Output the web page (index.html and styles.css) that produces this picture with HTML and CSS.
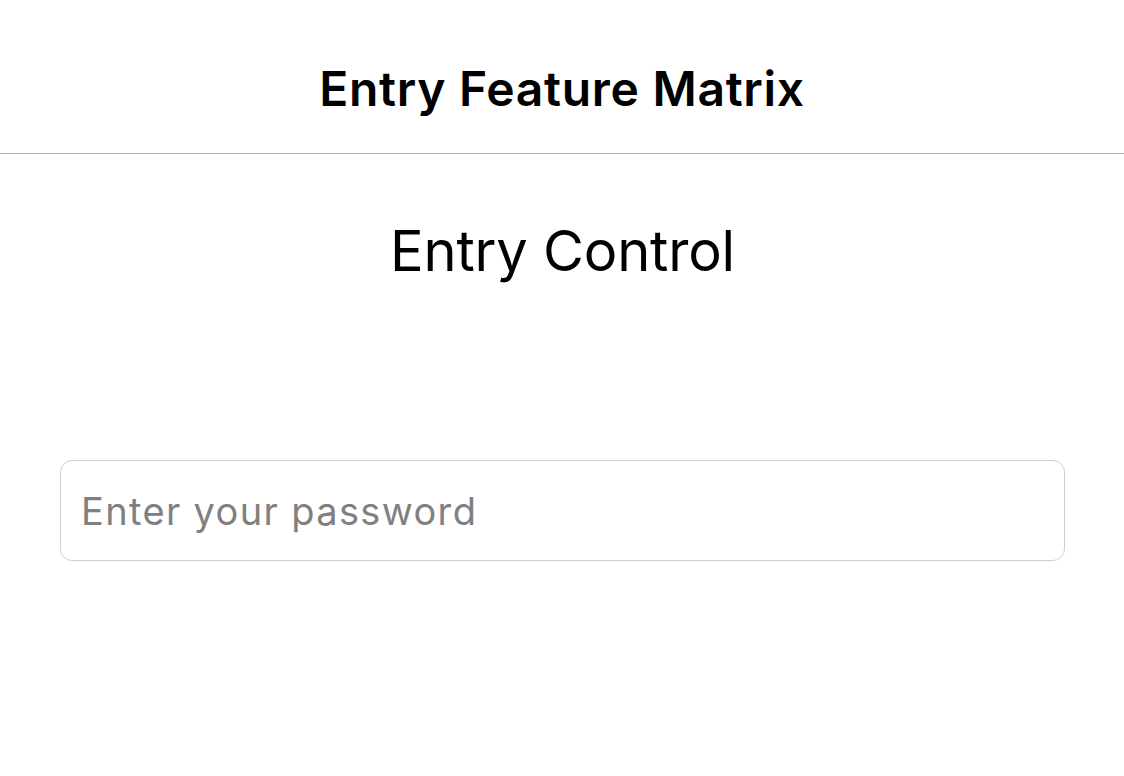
FILE: index.html
```html
<!DOCTYPE html>
<html>
<head>
<meta charset="utf-8">
<link rel="stylesheet" href="styles.css">
</head>
<body>
<header class="navbar"><h1 class="nav-title">Entry Feature Matrix</h1></header>
<main class="content">
  <h2 class="page-title">Entry Control</h2>
  <div class="field"><input class="entry" type="password" placeholder="Enter your password"></div>
</main>
</body>
</html>
```
FILE: styles.css
```css
html, body { margin: 0; padding: 0; background: #fff; }
body { font-family: Inter, "Noto Sans", sans-serif; color: #000; width: 1124px; height: 776px; overflow: hidden; }
.navbar { height: 154px; box-sizing: border-box; border-bottom: 1px solid #b5b5b5; display: flex; align-items: center; justify-content: center; }
.nav-title { margin: 0; font-size: 48px; font-weight: 600; letter-spacing: 0.7px; padding-top: 23px; }
.content { display: flex; flex-direction: column; align-items: center; padding: 62px 59px 0 60px; }
.page-title { margin: 0; font-size: 56px; font-weight: 400; line-height: 70px; letter-spacing: -0.2px; }
.field { align-self: stretch; margin-top: 174px; }
.entry { display: block; width: 100%; box-sizing: border-box; height: 101px; border: 1px solid #cfcfcf; border-radius: 12px; padding: 0 20px; font-family: Inter, "Noto Sans", sans-serif; font-size: 38px; letter-spacing: 1.35px; outline: none; background: #fff; }
.entry::placeholder { color: #808080; }
```
